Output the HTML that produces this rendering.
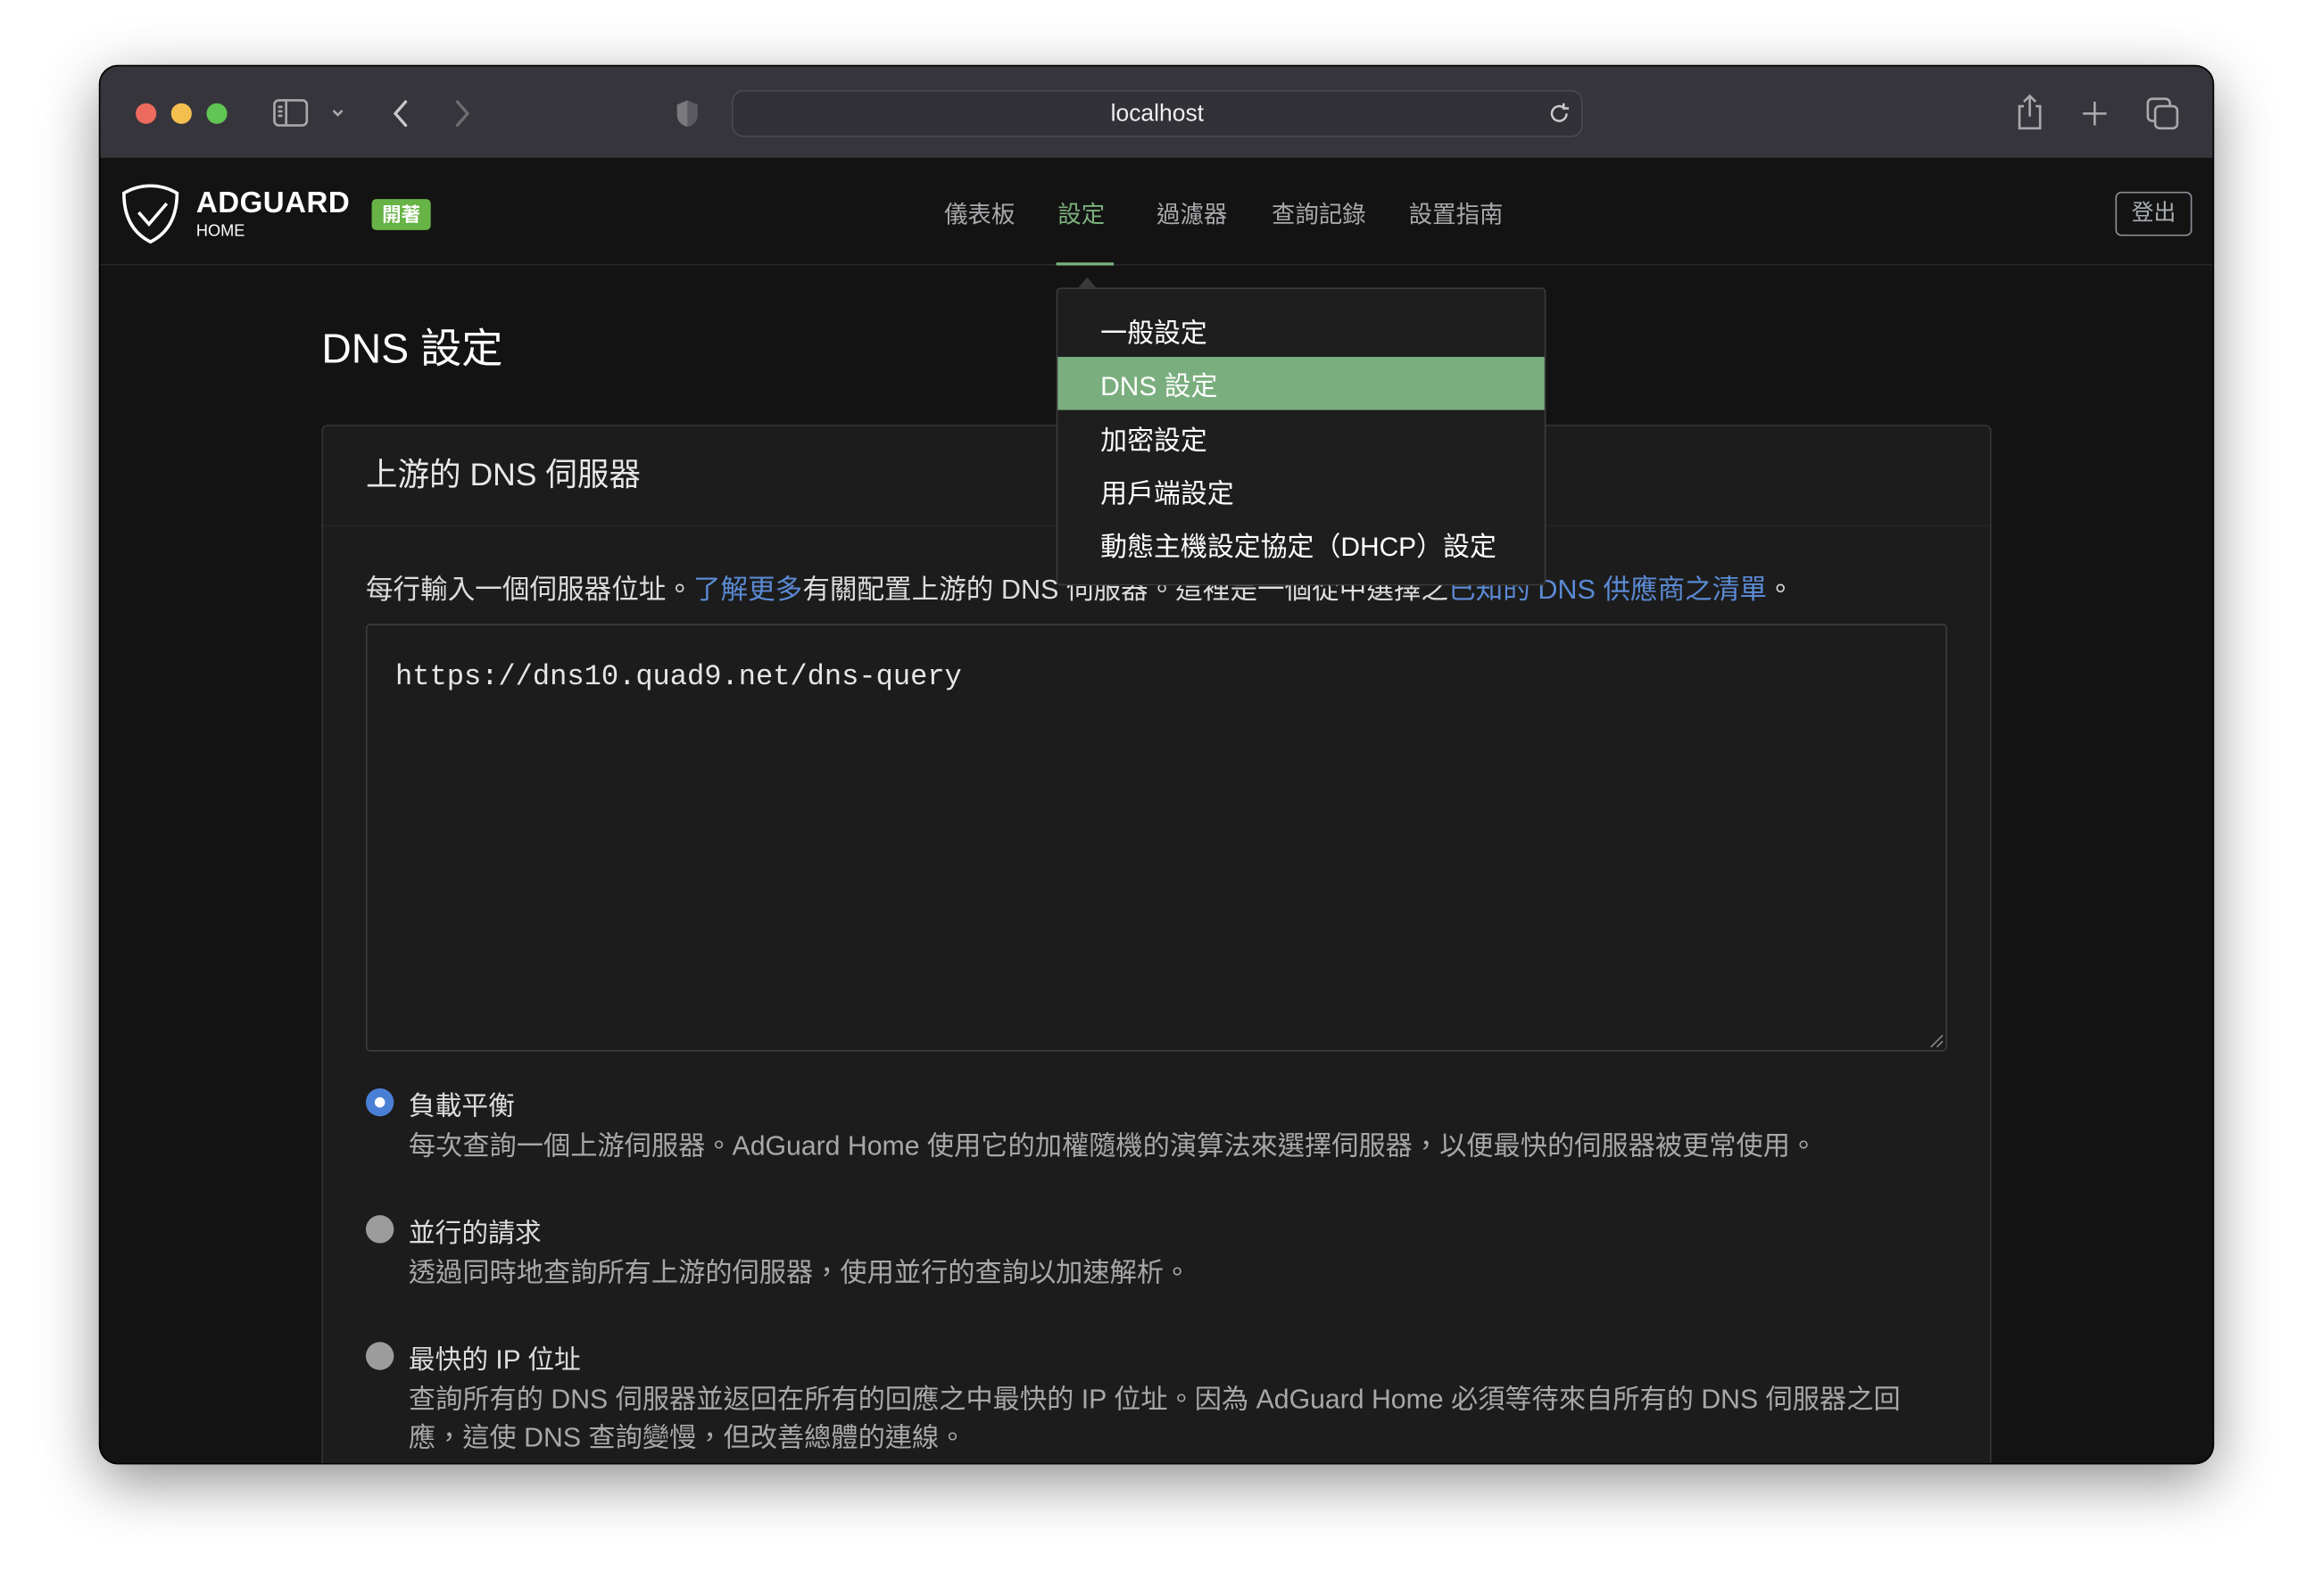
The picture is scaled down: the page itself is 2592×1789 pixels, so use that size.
<!DOCTYPE html>
<html><head><meta charset="utf-8">
<style>
*{margin:0;padding:0;box-sizing:border-box}
html,body{width:2592px;height:1788px;overflow:hidden;background:#fff}
#s{position:absolute;left:0;top:0;width:1568px;height:1082px;transform:scale(1.65306);transform-origin:0 0;font-family:"Liberation Sans","Noto Sans CJK TC",sans-serif}
.win{position:absolute;left:68px;top:45px;width:1432px;height:947px;border-radius:12px;overflow:hidden;background:#131313;box-shadow:0 12px 40px rgba(0,0,0,.45),0 0 0 1px #000}
.tb{position:absolute;left:0;top:0;width:100%;height:63px;background:#36353b;border-bottom:1px solid #111}
.dot{position:absolute;top:25px;width:14px;height:14px;border-radius:50%}
.url{position:absolute;left:428px;top:16px;width:577px;height:32px;border:1.5px solid #4a494f;border-radius:8px;background:#323137;color:#eee;font-size:16px;text-align:center;line-height:32px}
.nav{position:absolute;left:0;top:63px;width:100%;height:72px;background:#131313;border-bottom:1px solid #262626}
.ni{position:absolute;top:24px;font-size:16px;color:#a9a9ad}
.abs{position:absolute}
.card{position:absolute;left:150px;top:243px;width:1132px;height:760px;background:#1c1c1c;border:1px solid #343434;border-radius:4px}
.t{color:#ddd;font-size:18px;white-space:nowrap}
a{color:#5b8ad4;text-decoration:none}
.desc{color:#a8a8a8;font-size:18.3px;white-space:nowrap}
.radio{position:absolute;width:19px;height:19px;border-radius:50%;background:#9c9c9c}
.dd{position:absolute;left:648px;top:150px;width:332px;height:202px;background:#1e1e1e;border:1px solid #3a3a3a;border-radius:3px}
.di{position:absolute;left:29px;font-size:18.1px;color:#fff;white-space:nowrap}
</style></head><body>
<div id="s">
<div class="win">
 <div class="tb">
  <div class="dot" style="left:24px;background:#ed6a5e"></div>
  <div class="dot" style="left:48px;background:#f5bf4f"></div>
  <div class="dot" style="left:72px;background:#61c554"></div>
  <svg class="abs" style="left:116px;top:20px" width="60" height="24" viewBox="0 0 60 24" fill="none" stroke="#a9a8ad" stroke-width="1.6"><rect x="2" y="3" width="22" height="17" rx="3"/><line x1="10" y1="3" x2="10" y2="20"/><line x1="4.5" y1="7.5" x2="7.5" y2="7.5"/><line x1="4.5" y1="10.5" x2="7.5" y2="10.5"/><line x1="4.5" y1="13.5" x2="7.5" y2="13.5"/><path d="M42 10l3 3 3-3"/></svg>
  <svg class="abs" style="left:194px;top:20px" width="60" height="24" viewBox="0 0 60 24" fill="none" stroke-width="2" stroke-linecap="round"><path d="M13 4l-7 8 7 8" stroke="#c9c8cd"/><path d="M48 4l7 8-7 8" stroke="#6d6c71"/></svg>
  <svg class="abs" style="left:388px;top:21px" width="20" height="22" viewBox="0 0 20 22"><path d="M10 2l7 3v7c0 4-3 7-7 8-4-1-7-4-7-8V5z" fill="#5b5a60"/><path d="M10 2v18c-4-1-7-4-7-8V5z" fill="#7a797e"/></svg>
  <div class="url">localhost</div>
  <svg class="abs" style="left:980px;top:23px" width="18" height="18" viewBox="0 0 18 18" fill="none" stroke="#ccc" stroke-width="1.5"><path d="M14 9a5 5 0 1 1-2-4"/><path d="M12 2v3.5h3.5"/></svg>
  <svg class="abs" style="left:1296px;top:17px" width="24" height="28" viewBox="0 0 24 28" fill="none" stroke="#a9a8ad" stroke-width="1.6"><path d="M8 10H5v15h14V10h-3"/><path d="M12 3v14M8 7l4-4 4 4"/></svg>
  <svg class="abs" style="left:1340px;top:20px" width="24" height="24" viewBox="0 0 24 24" stroke="#a9a8ad" stroke-width="1.6"><path d="M12 4v16M4 12h16"/></svg>
  <svg class="abs" style="left:1384px;top:18px" width="28" height="28" viewBox="0 0 28 28" fill="none" stroke="#a9a8ad" stroke-width="1.6"><rect x="4" y="4" width="15" height="15" rx="3"/><rect x="9" y="9" width="15" height="15" rx="3" fill="#36353b"/></svg>
 </div>
 <div class="nav">
  <svg class="abs" style="left:14px;top:16px" width="40" height="42" viewBox="0 0 40 42" fill="none" stroke="#fff" stroke-width="2.2"><path d="M20 2C13 2 7 4 2 7c0 16 6 27 18 33C32 34 38 23 38 7 33 4 27 2 20 2z"/><path d="M12 20l7 8 12-14"/></svg>
  <div class="abs" style="left:65px;top:19px;color:#fff;font-weight:bold;font-size:20px;letter-spacing:.3px">ADGUARD</div>
  <div class="abs" style="left:65px;top:43px;color:#fff;font-size:11px">HOME</div>
  <div class="abs" style="left:184px;top:27px;width:40px;height:21px;background:#67b346;border-radius:3px;color:#fff;font-size:13px;font-weight:bold;text-align:center;line-height:21px">開著</div>
  <div class="ni" style="left:572px">儀表板</div>
  <div class="ni" style="left:649px;color:#7cb07e">設定</div>
  <div class="ni" style="left:716px">過濾器</div>
  <div class="ni" style="left:794px">查詢記錄</div>
  <div class="ni" style="left:887px">設置指南</div>
  <div class="abs" style="left:648px;top:70px;width:39px;height:2px;background:#7cb07e"></div>
  <div class="abs" style="left:1366px;top:22px;width:52px;height:30px;border:1px solid #8b8f96;border-radius:4px;color:#a9adb2;font-size:15px;text-align:center;line-height:28px">登出</div>
 </div>
 <div class="abs" style="left:150px;top:170px;color:#fff;font-size:28px">DNS 設定</div>
 <div class="card">
  <div class="abs t" style="left:29px;top:16px;font-size:21.5px;color:#e8e8e8">上游的 DNS 伺服器</div>
  <div class="abs" style="left:0;top:67px;width:100%;height:1px;background:#23242a"></div>
  <div class="abs t" style="left:29px;top:97px;font-size:18.5px">每行輸入一個伺服器位址。<a>了解更多</a>有關配置上游的 DNS 伺服器。這裡是一個從中選擇之<a>已知的 DNS 供應商之清單</a>。</div>
  <div class="abs" style="left:29px;top:134px;width:1072px;height:290px;border:1px solid #3c3c3c;border-radius:3px;background:#1c1c1c">
   <div class="abs" style="left:19px;top:24px;font-family:'Liberation Mono',monospace;font-size:19.4px;color:#e6e6e6">https://dns10.quad9.net/dns-query</div>
   <svg class="abs" style="right:1px;bottom:1px" width="10" height="10" viewBox="0 0 10 10" stroke="#888" stroke-width="1"><path d="M1 9L9 1M5 9L9 5"/></svg>
  </div>
  <div class="radio" style="left:29px;top:449px;background:#4a7fd6"><div style="position:absolute;left:6px;top:6px;width:7px;height:7px;border-radius:50%;background:#fff"></div></div>
  <div class="abs t" style="left:58px;top:447px">負載平衡</div>
  <div class="abs desc" style="left:58px;top:474px">每次查詢一個上游伺服器。AdGuard Home 使用它的加權隨機的演算法來選擇伺服器，以便最快的伺服器被更常使用。</div>
  <div class="radio" style="left:29px;top:535px"></div>
  <div class="abs t" style="left:58px;top:533px">並行的請求</div>
  <div class="abs desc" style="left:58px;top:560px">透過同時地查詢所有上游的伺服器，使用並行的查詢以加速解析。</div>
  <div class="radio" style="left:29px;top:621px"></div>
  <div class="abs t" style="left:58px;top:619px">最快的 IP 位址</div>
  <div class="abs desc" style="left:58px;top:646px">查詢所有的 DNS 伺服器並返回在所有的回應之中最快的 IP 位址。因為 AdGuard Home 必須等待來自所有的 DNS 伺服器之回</div>
  <div class="abs desc" style="left:58px;top:672px">應，這使 DNS 查詢變慢，但改善總體的連線。</div>
 </div>
 <div class="abs" style="left:663px;top:143px;width:0;height:0;border-left:6px solid transparent;border-right:6px solid transparent;border-bottom:7px solid #3a3a3a"></div>
 <div class="dd">
  <div class="di" style="top:16px">一般設定</div>
  <div class="abs" style="left:0;top:46px;width:330px;height:36px;background:#7aae7e"></div>
  <div class="di" style="top:52px">DNS 設定</div>
  <div class="di" style="top:89px">加密設定</div>
  <div class="di" style="top:125px">用戶端設定</div>
  <div class="di" style="top:161px">動態主機設定協定（DHCP）設定</div>
 </div>
</div>
</div>
</body></html>
